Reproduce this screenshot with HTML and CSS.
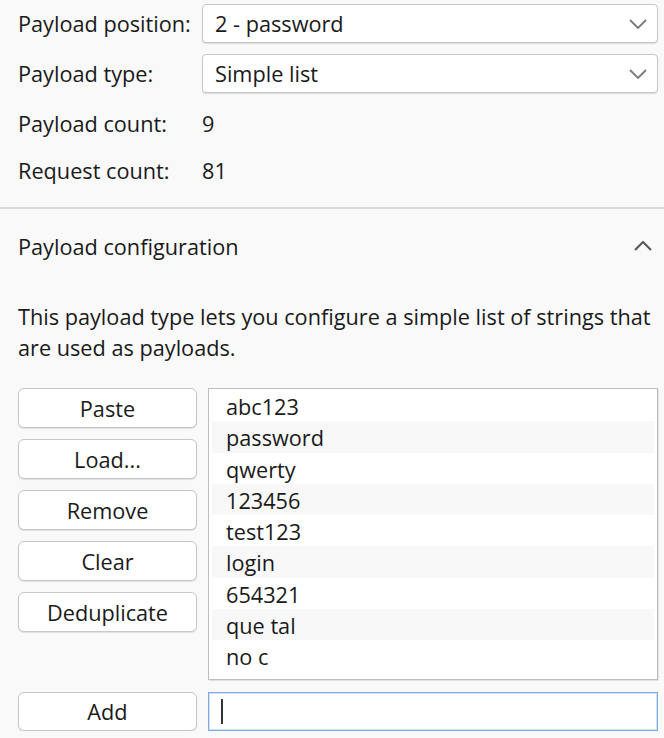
FILE: index.html
```html
<!DOCTYPE html>
<html lang="en">
<head>
<meta charset="utf-8">
<title>Payloads</title>
<link rel="stylesheet" href="styles.css">
</head>
<body>
<div class="page">
  <section class="settings">
    <div class="row">
      <span class="label">Payload position:</span>
      <div class="select">
        <span>2 - password</span>
        <svg class="chev-down" width="18" height="10" viewBox="0 0 18 10"><polyline points="1,1 9,9 17,1" fill="none" stroke="#7a7a7a" stroke-width="1.8"/></svg>
      </div>
    </div>
    <div class="row">
      <span class="label">Payload type:</span>
      <div class="select">
        <span>Simple list</span>
        <svg class="chev-down" width="18" height="10" viewBox="0 0 18 10"><polyline points="1,1 9,9 17,1" fill="none" stroke="#7a7a7a" stroke-width="1.8"/></svg>
      </div>
    </div>
    <div class="row">
      <span class="label">Payload count:</span>
      <span>9</span>
    </div>
    <div class="row row-last">
      <span class="label">Request count:</span>
      <span>81</span>
    </div>
  </section>

  <section class="config">
    <div class="config-header">
      <span>Payload configuration</span>
      <svg class="chev-up" width="18" height="10" viewBox="0 0 18 10"><polyline points="1,9 9,1 17,9" fill="none" stroke="#555" stroke-width="2"/></svg>
    </div>
    <p class="desc">This payload type lets you configure a simple list of strings that<br>are used as payloads.</p>

    <div class="editor">
      <div class="buttons">
        <button class="btn">Paste</button>
        <button class="btn">Load...</button>
        <button class="btn">Remove</button>
        <button class="btn">Clear</button>
        <button class="btn">Deduplicate</button>
      </div>
      <div class="list">
        <div class="item">abc123</div>
        <div class="item">password</div>
        <div class="item">qwerty</div>
        <div class="item">123456</div>
        <div class="item">test123</div>
        <div class="item">login</div>
        <div class="item">654321</div>
        <div class="item">que tal</div>
        <div class="item">no c</div>
      </div>
    </div>

    <div class="add-row">
      <button class="btn btn-add">Add</button>
      <div class="input"><span class="caret"></span></div>
    </div>
  </section>
</div>
</body>
</html>
```
FILE: styles.css
```css
* {
  box-sizing: border-box;
}

body {
  margin: 0;
  background: #f9f9f9;
  font-family: "Open Sans", "Noto Sans", sans-serif;
  font-size: 21.7px;
  color: #1a1a1a;
}

.settings {
  padding: 4px 6px 17px 18px;
  border-bottom: 2px solid #d9d9d9;
}

.row {
  display: flex;
  align-items: center;
  height: 39px;
}

.row + .row {
  margin-top: 11px;
}

.row.row-last {
  margin-top: 8px;
}

.label {
  width: 184px;
  flex: none;
}

.select {
  flex: 1;
  height: 39px;
  background: #fff;
  border: 1px solid #c8c8c8;
  border-radius: 4px;
  box-shadow: 0 1px 1px rgba(0, 0, 0, 0.12);
  display: flex;
  align-items: center;
  justify-content: space-between;
  padding: 0 10px 0 12px;
}

.chev-down,
.chev-up {
  display: block;
  flex: none;
}

.config {
  padding: 18px 6px 0 18px;
}

.config-header {
  display: flex;
  align-items: center;
  justify-content: space-between;
  height: 38px;
  padding-right: 6px;
}

.desc {
  margin: 35.5px 0 0;
  line-height: 31px;
}

.editor {
  display: flex;
  gap: 11px;
  margin-top: 25.5px;
}

.buttons {
  width: 179px;
  flex: none;
  display: flex;
  flex-direction: column;
  gap: 11px;
}

.btn {
  display: block;
  width: 100%;
  height: 40px;
  margin: 0;
  padding: 0;
  background: #fff;
  border: 1px solid #c6c6c6;
  border-radius: 6px;
  box-shadow: 0 1px 1px rgba(0, 0, 0, 0.1);
  font: inherit;
  color: inherit;
}

.list {
  flex: 1;
  height: 292px;
  background: #fff;
  border: 1px solid #bdbdbd;
  box-shadow: 1px 1px 0 #e2e2e2;
  padding: 1px 3px;
}

.item {
  height: 31.25px;
  line-height: 29px;
  padding: 2px 0 0 14px;
}

.item:nth-child(even) {
  background: #f8f8f8;
}

.add-row {
  display: flex;
  gap: 11px;
  margin-top: 12px;
}

.btn-add {
  width: 179px;
  flex: none;
  height: 39px;
}

.input {
  flex: 1;
  height: 39px;
  background: #fff;
  border: 1px solid #7eaae2;
  box-shadow: inset 0 0 0 1px #d3e3f7;
  display: flex;
  align-items: center;
  padding-left: 12px;
}

.caret {
  width: 2px;
  height: 25px;
  background: #333;
}
```
